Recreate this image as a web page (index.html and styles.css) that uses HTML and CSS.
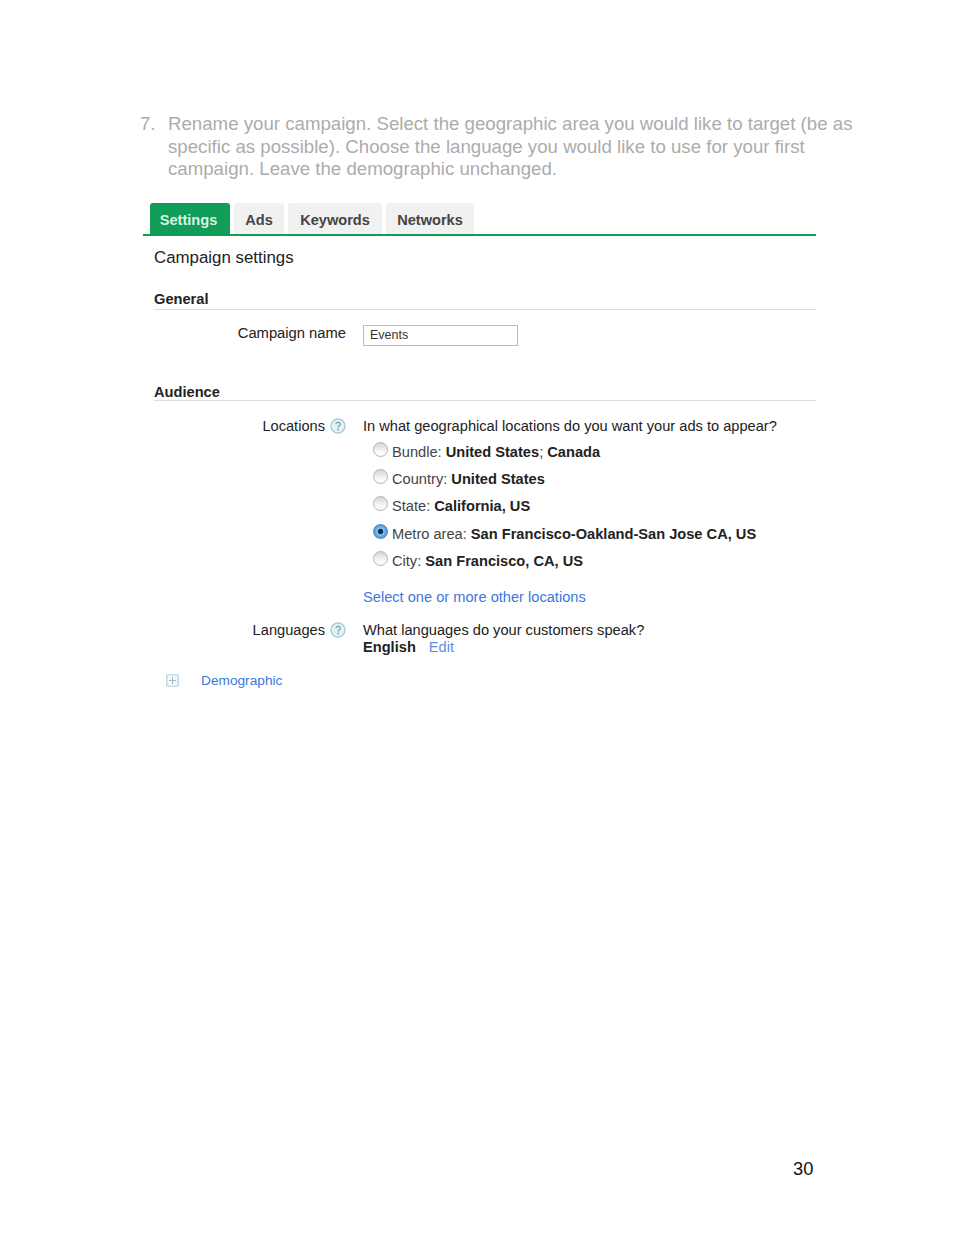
FILE: index.html
```html
<!DOCTYPE html>
<html lang="en">
<head>
<meta charset="utf-8">
<title>Campaign settings</title>
<link rel="stylesheet" href="styles.css">
</head>
<body>
<main class="page">
  <ol class="intro" start="7">
    <li><span class="num">7.</span><p>Rename your campaign. Select the geographic area you would like to target (be as specific as possible). Choose the language you would like to use for your first campaign. Leave the demographic unchanged.</p></li>
  </ol>
  <section class="shot">
    <nav class="tabs">
      <a class="tab active">Settings</a>
      <a class="tab t-ads">Ads</a>
      <a class="tab t-kw">Keywords</a>
      <a class="tab t-nw">Networks</a>
    </nav>
    <div class="content">
      <h1>Campaign settings</h1>
      <h2 class="general">General</h2>
      <div class="row name-row">
        <div class="label">Campaign name</div>
        <div class="value"><div class="input">Events</div></div>
      </div>
      <h2 class="audience">Audience</h2>
      <div class="row loc-row">
        <div class="label">Locations <svg class="help" viewBox="0 0 16 16"><circle cx="8" cy="8" r="7" fill="#e6f1f5" stroke="#a9ccd8" stroke-width="1.4"/><path d="M5.900 6.300c0-1.200.9-2 2.200-2s2.200.8 2.200 1.900c0 1.600-2.200 1.500-2.200 3.300" fill="none" stroke="#6f9fb3" stroke-width="1.200"/><circle cx="8.100" cy="11.500" r=".9" fill="#6f9fb3"/></svg></div>
        <div class="value">
          <div class="question">In what geographical locations do you want your ads to appear?</div>
          <ul class="radios">
            <li><i class="radio"></i>Bundle: <b>United States</b>; <b>Canada</b></li>
            <li><i class="radio"></i>Country: <b>United States</b></li>
            <li><i class="radio"></i>State: <b>California, US</b></li>
            <li class="metro"><i class="radio on"></i>Metro area: <b>San Francisco-Oakland-San Jose CA, US</b></li>
            <li><i class="radio"></i>City: <b>San Francisco, CA, US</b></li>
          </ul>
          <a class="link more">Select one or more other locations</a>
        </div>
      </div>
      <div class="row lang-row">
        <div class="label">Languages <svg class="help" viewBox="0 0 16 16"><circle cx="8" cy="8" r="7" fill="#e6f1f5" stroke="#a9ccd8" stroke-width="1.4"/><path d="M5.900 6.300c0-1.200.9-2 2.200-2s2.200.8 2.200 1.900c0 1.600-2.200 1.500-2.200 3.300" fill="none" stroke="#6f9fb3" stroke-width="1.200"/><circle cx="8.100" cy="11.500" r=".9" fill="#6f9fb3"/></svg></div>
        <div class="value">
          <div>What languages do your customers speak?</div>
          <div><b>English</b><a class="link edit">Edit</a></div>
        </div>
      </div>
      <div class="demo">
        <svg class="plus" viewBox="0 0 13 13"><rect x=".75" y=".75" width="11.500" height="11.500" rx="1" fill="#f2f7f9" stroke="#b4cfdb" stroke-width="1.200"/><path d="M6.500 3v7M3 6.500h7" stroke="#9dbccb" stroke-width="1"/></svg>
        <a class="link demo-link">Demographic</a>
      </div>
    </div>
  </section>
  <footer class="pageno">30</footer>
</main>
</body>
</html>
```
FILE: styles.css
```css
html, body {
  margin: 0;
  padding: 0;
  background: #fff;
}
.page {
  width: 954px;
  height: 1235px;
  box-sizing: border-box;
  padding-top: 113px;
  font-family: "Liberation Sans", Arial, sans-serif;
  color: #222;
  overflow: hidden;
  display: flex;
  flex-direction: column;
}
.intro {
  list-style: none;
  margin: 0;
  padding: 0 0 0 140px;
  width: 730px;
  font-size: 18.67px;
  line-height: 22.5px;
  color: #acacac;
}
.intro li {
  display: flex;
}
.num {
  width: 28px;
  flex: none;
}
.intro p {
  margin: 0;
}
.shot {
  margin: 22px 0 0 143px;
  width: 673px;
  font-size: 14.64px;
  line-height: 17px;
}
.tabs {
  display: flex;
  gap: 4px;
  height: 31px;
  padding-left: 7px;
  border-bottom: 2px solid #0f9d58;
}
.tab {
  box-sizing: border-box;
  height: 31px;
  padding-top: 9px;
  text-align: center;
  background: #f1f1f1;
  border-radius: 3px 3px 0 0;
  font-weight: bold;
  font-size: 14.6px;
  color: #444;
}
.tab.active {
  width: 80px;
  padding-right: 3px;
  background: #0f9d58;
  color: #d9f1e3;
}
.t-ads { width: 50px; }
.t-kw { width: 94px; }
.t-nw { width: 88px; }
.content {
  margin-left: 11px;
}
h1 {
  margin: 12px 0 0;
  font-weight: normal;
  font-size: 16.86px;
  line-height: 20px;
}
h2 {
  margin: 0;
  font-size: 14.64px;
  line-height: 17px;
  padding-bottom: 1px;
  border-bottom: 1px solid #ddd;
}
.general { margin-top: 23px; }
.audience {
  margin-top: 38px;
  line-height: 16px;
  padding-bottom: 0;
}
.row {
  display: grid;
  grid-template-columns: 192px 1fr;
  column-gap: 17px;
}
.name-row { margin-top: 15px; }
.loc-row { margin-top: 17px; }
.lang-row { margin-top: 16px; }
.label {
  display: flex;
  justify-content: flex-end;
  align-items: flex-start;
  gap: 5px;
}
.name-row .label {
  font-size: 14.75px;
}
.help {
  width: 16px;
  height: 16px;
  flex: none;
}
.input {
  box-sizing: border-box;
  width: 155px;
  height: 21px;
  padding: 1px 6px;
  border: 1px solid #bbb;
  font-size: 12.500px;
  color: #333;
}
.radios {
  list-style: none;
  margin: 9px 0 0;
  padding: 0 0 0 10px;
}
.radios li {
  display: flex;
  height: 27.400px;
  white-space: pre-wrap;
  color: #444;
}
.value b {
  color: #222;
}
.radio {
  width: 15px;
  height: 15px;
  margin: -2px 4px 0 0;
  flex: none;
  box-sizing: border-box;
  border-radius: 50%;
  border: 1px solid #b5b5b5;
  background: linear-gradient(#d4d4d4, #fafafa 70%);
}
.radio.on {
  border-color: #4a86c0;
  background: radial-gradient(circle, #12304f 0 2.200px, #8fc4f0 3.200px, #3f8cd6 7px);
}
.link {
  color: #3b78e0;
}
.more {
  display: block;
  margin-top: 9px;
}
.edit {
  margin-left: 13px;
  color: #5b8fe0;
}
.demo {
  display: flex;
  align-items: center;
  margin: 16px 0 0 12px;
  gap: 22px;
}
.demo-link {
  font-size: 13.7px;
}
.plus {
  width: 13px;
  height: 13px;
  flex: none;
}
.pageno {
  margin: auto 0 0 793px;
  padding-bottom: 55px;
  font-size: 18.300px;
  line-height: 22px;
  color: #111;
}
```
